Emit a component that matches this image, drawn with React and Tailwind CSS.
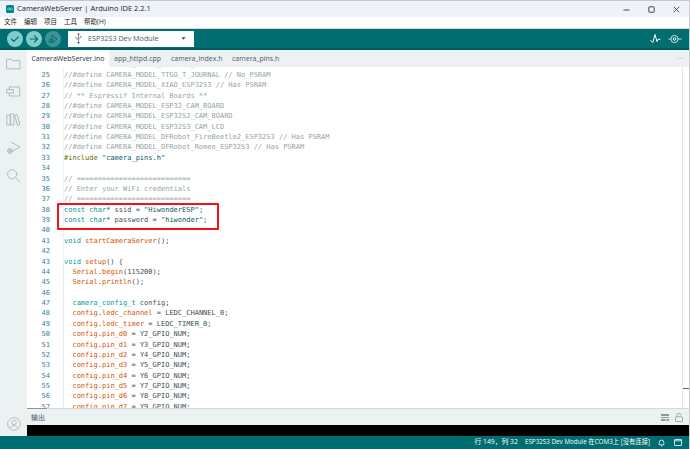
const UI = { fontFamily: '"Open Sans","Noto Sans","Noto Sans CJK SC",sans-serif' };
const MONO = { fontFamily: '"DejaVu Sans Mono","Liberation Mono",monospace' };

const C = ({ children }) => <span className="text-[#95a5a6]">{children}</span>;
const K = ({ children }) => <span className="text-[#00979d]">{children}</span>;
const F = ({ children }) => <span className="text-[#d35400]">{children}</span>;
const S = ({ children }) => <span className="text-[#005c5f]">{children}</span>;

const pin = (n, y) => (
  <>
    <F>config</F>.<F>pin_d{n}</F> = Y{y}_GPIO_NUM;
  </>
);

const LINES = [
  [24, <C>//#define CAMERA_MODEL_M5STACK_UNITCAM // No PSRAM</C>],
  [25, <C>//#define CAMERA_MODEL_TTGO_T_JOURNAL // No PSRAM</C>],
  [26, <C>//#define CAMERA_MODEL_XIAO_ESP32S3 // Has PSRAM</C>],
  [27, <C>// ** Espressif Internal Boards **</C>],
  [28, <C>//#define CAMERA_MODEL_ESP32_CAM_BOARD</C>],
  [29, <C>//#define CAMERA_MODEL_ESP32S2_CAM_BOARD</C>],
  [30, <C>//#define CAMERA_MODEL_ESP32S3_CAM_LCD</C>],
  [31, <C>//#define CAMERA_MODEL_DFRobot_FireBeetle2_ESP32S3 // Has PSRAM</C>],
  [32, <C>//#define CAMERA_MODEL_DFRobot_Romeo_ESP32S3 // Has PSRAM</C>],
  [33, <><span className="text-[#5e6d03]">#include</span> <S>"camera_pins.h"</S></>],
  [34, ""],
  [35, <C>// ===========================</C>],
  [36, <C>// Enter your WiFi credentials</C>],
  [37, <C>// ===========================</C>],
  [38, <><K>const</K> <K>char</K>* ssid = <S>"HiwonderESP"</S>;</>],
  [39, <><K>const</K> <K>char</K>* password = <S>"hiwonder"</S>;</>],
  [40, ""],
  [41, <><K>void</K> <F>startCameraServer</F>();</>],
  [42, ""],
  [43, <><K>void</K> <F>setup</F>() {"{"}</>],
  [44, <><K>  </K><F>Serial</F>.<F>begin</F>(115200);</>],
  [45, <><K>  </K><F>Serial</F>.<F>println</F>();</>],
  [46, ""],
  [47, <><K>  camera_config_t</K> config;</>],
  [48, <>  <F>config</F>.<F>ledc_channel</F> = LEDC_CHANNEL_0;</>],
  [49, <>  <F>config</F>.<F>ledc_timer</F> = LEDC_TIMER_0;</>],
  [50, <>  {pin(0, 2)}</>],
  [51, <>  {pin(1, 3)}</>],
  [52, <>  {pin(2, 4)}</>],
  [53, <>  {pin(3, 5)}</>],
  [54, <>  {pin(4, 6)}</>],
  [55, <>  {pin(5, 7)}</>],
  [56, <>  {pin(6, 8)}</>],
  [57, <>  {pin(7, 9)}</>],
];

const SideIcon = ({ children }) => (
  <svg width="15" height="15" viewBox="0 0 15 15" fill="none" stroke="#aab6b8" strokeWidth="0.9" strokeLinejoin="round" strokeLinecap="round">
    {children}
  </svg>
);

function ToolBtn({ bg, children }) {
  return (
    <div className={`w-[16px] h-[16px] rounded-full flex items-center justify-center ${bg}`}>
      <svg width="12" height="12" viewBox="0 0 12 12" fill="none" strokeLinecap="round" strokeLinejoin="round" strokeWidth="1.2" stroke="#006d70">
        {children}
      </svg>
    </div>
  );
}

export default function App() {
  return (
    <div style={UI} className="relative w-[690px] h-[449px] overflow-hidden flex flex-col bg-white border-r border-[#c9cdd0]">
      {/* title bar */}
      <div className="h-[17px] shrink-0 bg-[#eef2fb] border-t border-[#c4c7cc] flex items-center pl-[6px]">
        <svg width="8" height="8" viewBox="0 0 8 8" className="shrink-0">
          <rect width="8" height="8" rx="1.5" fill="#00838a" />
          <path d="M1.6 4a1 1 0 0 1 2.2 0a1 1 0 0 0 .4 0a1 1 0 0 1 2.2 0a1 1 0 0 1-2.2 0a1 1 0 0 0-.4 0a1 1 0 0 1-2.2 0" fill="none" stroke="#cfeeee" strokeWidth="0.5" />
        </svg>
        <span className="ml-[3px] text-[7.5px] leading-none text-[#222]">CameraWebServer | Arduino IDE 2.2.1</span>
        <div className="ml-auto flex items-center gap-[18px] pr-[9px]">
          <svg width="7" height="7" viewBox="0 0 7 7"><path d="M0.5 4h6" stroke="#333" strokeWidth="0.9" /></svg>
          <svg width="7" height="7" viewBox="0 0 7 7"><rect x="0.8" y="0.8" width="5.4" height="5.4" rx="0.6" fill="none" stroke="#333" strokeWidth="0.9" /></svg>
          <svg width="7" height="7" viewBox="0 0 7 7"><path d="M0.7 0.7l5.6 5.6M6.3 0.7l-5.6 5.6" stroke="#333" strokeWidth="0.8" /></svg>
        </div>
      </div>

      {/* menu */}
      <div className="h-[11px] shrink-0 bg-white flex items-center pl-[4px] gap-[7px] text-[6.5px] leading-none text-[#222]">
        <span>文件</span>
        <span>编辑</span>
        <span>项目</span>
        <span>工具</span>
        <span>帮助(H)</span>
      </div>

      {/* toolbar */}
      <div className="h-[22px] shrink-0 bg-[#006d70] border-t border-[#d5dddd] border-b-2 border-b-[#005c5f] flex items-center pl-[7px] pr-[7px]">
        <div className="flex items-center gap-[3px]">
          <ToolBtn bg="bg-[#7fcdcf]"><path d="M2.6 6.2l2.3 2.2 4.4-4.6" /></ToolBtn>
          <ToolBtn bg="bg-[#7fcdcf]"><path d="M2.2 6h7.4M6.4 2.8L9.6 6 6.4 9.2" /></ToolBtn>
          <div className="w-[16px] h-[16px] rounded-full bg-[#3f9193] flex items-center justify-center">
            <svg width="12" height="12" viewBox="0 0 12 12" fill="none" stroke="#006d70" strokeWidth="1">
              <path d="M5 2.2L10 6 5 9.8z" />
              <circle cx="3.6" cy="8" r="1.6" />
            </svg>
          </div>
        </div>
        <div className="ml-[7px] w-[126px] h-[16px] bg-white flex items-center pl-[7px] pr-[8px]">
          <svg width="7" height="11" viewBox="0 0 7 11" fill="none" stroke="#5a686d" strokeWidth="0.7">
            <path d="M3.5 0.5v8.8M3.5 7L1 5.4V3.6M3.5 5.8L6 4.2V2.6" />
            <circle cx="3.5" cy="9.6" r="0.8" fill="#5a686d" />
            <path d="M2.7 1.4L3.5 0.4l.8 1z" fill="#5a686d" />
          </svg>
          <span className="ml-[6px] text-[7.2px] leading-none text-[#4e5b61]">ESP32S3 Dev Module</span>
          <svg width="5" height="3" viewBox="0 0 5 3" className="ml-auto"><path d="M0.5 0.3h4L2.5 2.7z" fill="#37474b" /></svg>
        </div>
        <div className="ml-auto flex items-center gap-[7px]">
          <svg width="11" height="12" viewBox="0 0 11 12" fill="none" stroke="#fff" strokeWidth="1" strokeLinejoin="round" strokeLinecap="round">
            <path d="M0.8 7.5l2 2 2.2-8 2 7 1-2.2h2" />
          </svg>
          <svg width="14" height="12" viewBox="0 0 14 12" fill="none" stroke="#fff" strokeWidth="0.8">
            <circle cx="6.5" cy="6" r="3.6" />
            <circle cx="6.5" cy="6" r="1.3" strokeWidth="1" />
            <path d="M0.5 6h2.3M10.2 6h3.3" />
          </svg>
        </div>
      </div>

      {/* body */}
      <div className="flex-1 min-h-0 flex">
        <div className="w-[27px] shrink-0 bg-[#ecf1f1] flex flex-col items-center pt-[6px] pb-[5px] gap-[13px]">
          <SideIcon><path d="M1 3.2h4.4l1.2 1.4H14v8.2H1z" /></SideIcon>
          <SideIcon><path d="M3.4 3h10.2v9H3.4V9.6M3.4 5.4V3" /><path d="M1 5.6h6.4v3.4H1z" /></SideIcon>
          <SideIcon><path d="M1.2 3h3v10h-3zM5 2h3v11H5zM9 3.2l2-.7 3 10-2 .7z" /></SideIcon>
          <SideIcon><path d="M5 2l9 5-7.5 4.2" /><circle cx="4" cy="11" r="2.4" /><path d="M4 8.6v4.8M1.6 11h4.8" /></SideIcon>
          <SideIcon><circle cx="6.2" cy="6.2" r="4.6" /><path d="M9.6 9.6l4.4 4.4" /></SideIcon>
          <div className="mt-auto">
            <svg width="14" height="14" viewBox="0 0 14 14" fill="none" stroke="#a9b4b6" strokeWidth="0.8">
              <circle cx="7" cy="7" r="6.4" />
              <circle cx="7" cy="5.4" r="2.3" />
              <path d="M2.8 11.6c.7-2 2.4-3 4.2-3s3.5 1 4.2 3" />
            </svg>
          </div>
        </div>

        <div className="flex-1 min-w-0 flex flex-col">
          {/* tabs */}
          <div className="h-[17px] shrink-0 bg-[#ecf1f1] flex items-stretch text-[7px] leading-none text-[#4e5b61]">
            <div className="w-[82px] bg-white flex items-center justify-center text-[#2b3438]">CameraWebServer.ino</div>
            <div className="w-[57px] pl-[5px] flex items-center">app_httpd.cpp</div>
            <div className="w-[61px] pl-[5px] flex items-center">camera_index.h</div>
            <div className="pl-[5px] flex items-center">camera_pins.h</div>
            <span className="ml-auto pr-[5px] flex items-center text-[#8a9699] tracking-[0.5px]">···</span>
          </div>

          {/* editor */}
          <div className="flex-1 min-h-0 flex overflow-hidden bg-white">
            <div style={MONO} className="flex-1 min-w-0 -mt-[7.6px] text-[7px] leading-[10.38px] text-[#434f54]">
              {LINES.map(([n, code]) => (
                <div key={n} className="flex h-[10.38px] whitespace-pre">
                  <span className="w-[23px] shrink-0 text-right text-[#2f7f9c]">{n}</span>
                  <span className={`ml-[13px] border-l ${n >= 44 ? "border-[#e4e8e9]" : "border-[#eef1f1]"} flex-1`}>{code}</span>
                </div>
              ))}
            </div>
            <div className="w-[7px] shrink-0 border-l border-[#e3e6e7] flex flex-col">
              <div className="mt-auto mb-[19px] h-[1px] bg-[#5a6b72]" />
            </div>
          </div>

          {/* output */}
          <div className="relative h-[17px] shrink-0 bg-[#ecf1f1] border-t border-[#d3d9da] flex items-center pl-[4px] pr-[6px] text-[7px] leading-none text-[#4e5b61]">
            <div className="absolute -top-px left-0 w-[20px] h-px bg-[#8a9699]" />
            <span>输出</span>
            <div className="ml-auto flex items-center gap-[6px]">
              <svg width="8" height="7" viewBox="0 0 8 7"><path d="M0 0h8v2H0zM0 3h8v1H0zM0 5h4.5v2H0zM5.5 5H8v2H5.5z" fill="#8b9a9e" /></svg>
              <svg width="8" height="9" viewBox="0 0 8 9" fill="none" stroke="#8b9a9e" strokeWidth="0.8"><rect x="0.5" y="3.8" width="7" height="4.7" rx="0.6" /><path d="M2 3.8V2.4a2 2 0 0 1 4 0" /></svg>
            </div>
          </div>
          <div className="h-[11px] shrink-0 bg-black" />
        </div>
      </div>

      {/* status */}
      <div className="h-[13px] shrink-0 bg-[#006d70] flex items-center justify-end pr-[7px] leading-none text-white">
        <span className="text-[6.8px]">行 149，列 32</span>
        <span className="ml-[7px] text-[6.3px]">ESP32S3 Dev Module 在COM3上 [没有连接]</span>
        <svg width="7" height="8" viewBox="0 0 7 8" className="ml-[8px]" fill="none" stroke="#fff" strokeWidth="0.8"><path d="M1.2 5.8V3.4a2.3 2.3 0 0 1 4.6 0v2.4zM2.8 7h1.4" /></svg>
        <svg width="8" height="7" viewBox="0 0 8 7" className="ml-[9px]" fill="none" stroke="#fff" strokeWidth="0.8"><rect x="0.5" y="0.5" width="7" height="6" rx="0.5" /><path d="M0.5 1.8h7" /></svg>
      </div>

      {/* annotation */}
      <div className="absolute left-[57px] top-[203px] w-[162px] h-[27px] border-2 border-[#f5101a] rounded-[1px]" />
    </div>
  );
}
